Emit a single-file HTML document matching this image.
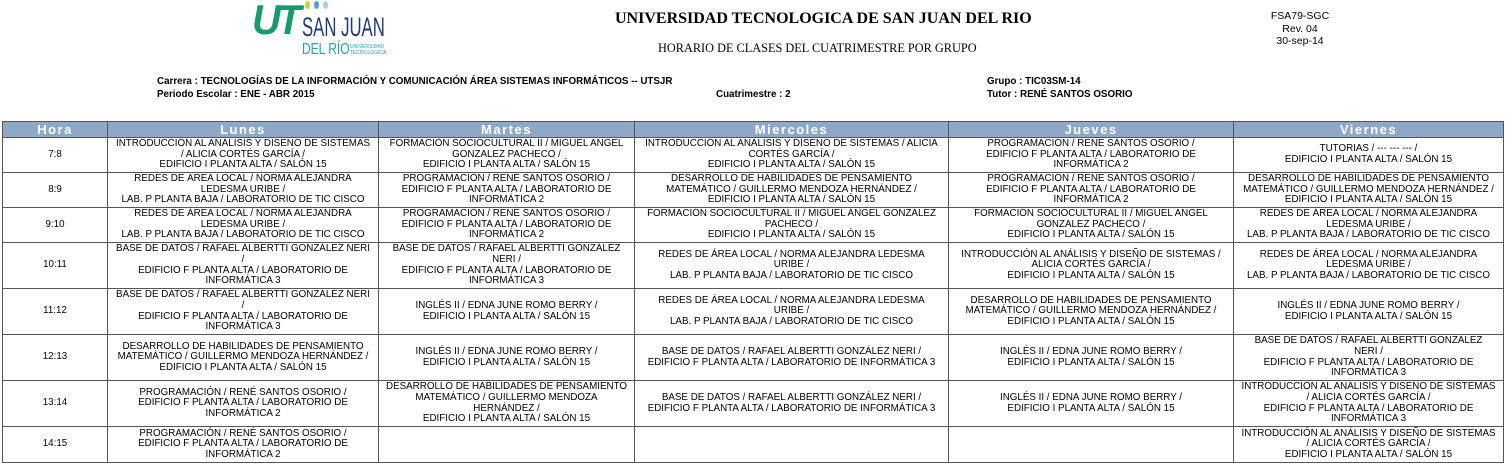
<!DOCTYPE html>
<html><head><meta charset="utf-8"><style>
body{margin:0;width:1507px;height:464px;background:#fff;position:relative;overflow:hidden;font-family:"Liberation Sans",Arial,sans-serif;color:#000}
.a{position:absolute;white-space:nowrap}
table{position:absolute;left:2px;top:121px;border-collapse:collapse;table-layout:fixed;width:1501px}
td,th{border:1px solid #555;padding:0;text-align:center;vertical-align:middle;overflow:hidden}
th{background:#8ea9c8;color:#fff;font-size:13px;letter-spacing:1.5px;height:15px;line-height:15px}
td{font-size:9.8px;line-height:10.6px;white-space:nowrap}
</style></head><body>
<div class="a" style="left:252px;top:-4px;font:italic 900 42px 'Liberation Sans';color:#1a9a6c;letter-spacing:-4px;transform:scaleX(0.95);transform-origin:left">UT</div>
<div class="a" style="left:305px;top:1px;width:5px;height:8px;border-radius:50%;background:#c3d43a"></div>
<div class="a" style="left:314px;top:1px;width:5px;height:8px;border-radius:50%;background:#4aa3d8"></div>
<div class="a" style="left:323px;top:1px;width:5px;height:8px;border-radius:50%;background:#a8cde8"></div>
<div class="a" style="left:302px;top:12px;font-size:27px;color:#1f3b6e;transform:scaleX(0.62);transform-origin:left">SAN JUAN</div>
<div class="a" style="left:302px;top:41px;font-size:16px;color:#2aa0b0;transform:scaleX(0.75);transform-origin:left">DEL RÍO</div>
<div class="a" style="left:350px;top:44px;font-size:5px;line-height:6px;color:#2aa0b0">UNIVERSIDAD<br>TECNOLÓGICA</div>
<div class="a" style="left:615px;top:10px;font:bold 16px 'Liberation Serif',serif">UNIVERSIDAD TECNOLOGICA DE SAN JUAN DEL RIO</div>
<div class="a" style="left:658px;top:41px;font:12.3px 'Liberation Serif',serif">HORARIO DE CLASES DEL CUATRIMESTRE POR GRUPO</div>
<div class="a" style="left:1260px;top:10px;width:80px;text-align:center;font-size:10.5px;line-height:12.5px">FSA79-SGC<br>Rev. 04<br>30-sep-14</div>
<div class="a" style="left:157px;top:75px;font:bold 9.8px 'Liberation Sans';line-height:13px">Carrera : TECNOLOGÍAS DE LA INFORMACIÓN Y COMUNICACIÓN ÁREA SISTEMAS INFORMÁTICOS -- UTSJR<br>Periodo Escolar : ENE - ABR 2015</div>
<div class="a" style="left:716px;top:88px;font:bold 9.8px 'Liberation Sans';line-height:13px">Cuatrimestre : 2</div>
<div class="a" style="left:987px;top:75px;font:bold 9.8px 'Liberation Sans';line-height:13px">Grupo : TIC03SM-14<br>Tutor : RENÉ SANTOS OSORIO</div>
<table>
<colgroup><col style="width:105px"><col style="width:271px"><col style="width:256px"><col style="width:314px"><col style="width:285px"><col style="width:270px"></colgroup>
<tr><th>Hora</th><th>Lunes</th><th>Martes</th><th>Miercoles</th><th>Jueves</th><th>Viernes</th></tr>
<tr style="height:35px"><td>7:8</td><td>INTRODUCCIÓN AL ANÁLISIS Y DISEÑO DE SISTEMAS<br>/ ALICIA CORTÉS GARCÍA /<br>EDIFICIO I PLANTA ALTA / SALÓN 15</td><td>FORMACIÓN SOCIOCULTURAL II / MIGUEL ANGEL<br>GONZALEZ PACHECO /<br>EDIFICIO I PLANTA ALTA / SALÓN 15</td><td>INTRODUCCIÓN AL ANÁLISIS Y DISEÑO DE SISTEMAS / ALICIA<br>CORTÉS GARCÍA /<br>EDIFICIO I PLANTA ALTA / SALÓN 15</td><td>PROGRAMACIÓN / RENÉ SANTOS OSORIO /<br>EDIFICIO F PLANTA ALTA / LABORATORIO DE<br>INFORMÁTICA 2</td><td>TUTORIAS / --- --- --- /<br>EDIFICIO I PLANTA ALTA / SALÓN 15</td></tr>
<tr style="height:35px"><td>8:9</td><td>REDES DE ÁREA LOCAL / NORMA ALEJANDRA<br>LEDESMA URIBE /<br>LAB. P PLANTA BAJA / LABORATORIO DE TIC CISCO</td><td>PROGRAMACIÓN / RENÉ SANTOS OSORIO /<br>EDIFICIO F PLANTA ALTA / LABORATORIO DE<br>INFORMÁTICA 2</td><td>DESARROLLO DE HABILIDADES DE PENSAMIENTO<br>MATEMÁTICO / GUILLERMO MENDOZA HERNÁNDEZ /<br>EDIFICIO I PLANTA ALTA / SALÓN 15</td><td>PROGRAMACIÓN / RENÉ SANTOS OSORIO /<br>EDIFICIO F PLANTA ALTA / LABORATORIO DE<br>INFORMÁTICA 2</td><td>DESARROLLO DE HABILIDADES DE PENSAMIENTO<br>MATEMÁTICO / GUILLERMO MENDOZA HERNÁNDEZ /<br>EDIFICIO I PLANTA ALTA / SALÓN 15</td></tr>
<tr style="height:35px"><td>9:10</td><td>REDES DE ÁREA LOCAL / NORMA ALEJANDRA<br>LEDESMA URIBE /<br>LAB. P PLANTA BAJA / LABORATORIO DE TIC CISCO</td><td>PROGRAMACIÓN / RENÉ SANTOS OSORIO /<br>EDIFICIO F PLANTA ALTA / LABORATORIO DE<br>INFORMÁTICA 2</td><td>FORMACIÓN SOCIOCULTURAL II / MIGUEL ANGEL GONZALEZ<br>PACHECO /<br>EDIFICIO I PLANTA ALTA / SALÓN 15</td><td>FORMACIÓN SOCIOCULTURAL II / MIGUEL ANGEL<br>GONZALEZ PACHECO /<br>EDIFICIO I PLANTA ALTA / SALÓN 15</td><td>REDES DE ÁREA LOCAL / NORMA ALEJANDRA<br>LEDESMA URIBE /<br>LAB. P PLANTA BAJA / LABORATORIO DE TIC CISCO</td></tr>
<tr style="height:46px"><td>10:11</td><td>BASE DE DATOS / RAFAEL ALBERTTI GONZÁLEZ NERI<br>/<br>EDIFICIO F PLANTA ALTA / LABORATORIO DE<br>INFORMÁTICA 3</td><td>BASE DE DATOS / RAFAEL ALBERTTI GONZÁLEZ<br>NERI /<br>EDIFICIO F PLANTA ALTA / LABORATORIO DE<br>INFORMÁTICA 3</td><td>REDES DE ÁREA LOCAL / NORMA ALEJANDRA LEDESMA<br>URIBE /<br>LAB. P PLANTA BAJA / LABORATORIO DE TIC CISCO</td><td>INTRODUCCIÓN AL ANÁLISIS Y DISEÑO DE SISTEMAS /<br>ALICIA CORTÉS GARCÍA /<br>EDIFICIO I PLANTA ALTA / SALÓN 15</td><td>REDES DE ÁREA LOCAL / NORMA ALEJANDRA<br>LEDESMA URIBE /<br>LAB. P PLANTA BAJA / LABORATORIO DE TIC CISCO</td></tr>
<tr style="height:46px"><td>11:12</td><td>BASE DE DATOS / RAFAEL ALBERTTI GONZÁLEZ NERI<br>/<br>EDIFICIO F PLANTA ALTA / LABORATORIO DE<br>INFORMÁTICA 3</td><td>INGLÉS II / EDNA JUNE ROMO BERRY /<br>EDIFICIO I PLANTA ALTA / SALÓN 15</td><td>REDES DE ÁREA LOCAL / NORMA ALEJANDRA LEDESMA<br>URIBE /<br>LAB. P PLANTA BAJA / LABORATORIO DE TIC CISCO</td><td>DESARROLLO DE HABILIDADES DE PENSAMIENTO<br>MATEMÁTICO / GUILLERMO MENDOZA HERNÁNDEZ /<br>EDIFICIO I PLANTA ALTA / SALÓN 15</td><td>INGLÉS II / EDNA JUNE ROMO BERRY /<br>EDIFICIO I PLANTA ALTA / SALÓN 15</td></tr>
<tr style="height:46px"><td>12:13</td><td>DESARROLLO DE HABILIDADES DE PENSAMIENTO<br>MATEMÁTICO / GUILLERMO MENDOZA HERNÁNDEZ /<br>EDIFICIO I PLANTA ALTA / SALÓN 15</td><td>INGLÉS II / EDNA JUNE ROMO BERRY /<br>EDIFICIO I PLANTA ALTA / SALÓN 15</td><td>BASE DE DATOS / RAFAEL ALBERTTI GONZÁLEZ NERI /<br>EDIFICIO F PLANTA ALTA / LABORATORIO DE INFORMÁTICA 3</td><td>INGLÉS II / EDNA JUNE ROMO BERRY /<br>EDIFICIO I PLANTA ALTA / SALÓN 15</td><td>BASE DE DATOS / RAFAEL ALBERTTI GONZÁLEZ<br>NERI /<br>EDIFICIO F PLANTA ALTA / LABORATORIO DE<br>INFORMÁTICA 3</td></tr>
<tr style="height:46px"><td>13:14</td><td>PROGRAMACIÓN / RENÉ SANTOS OSORIO /<br>EDIFICIO F PLANTA ALTA / LABORATORIO DE<br>INFORMÁTICA 2</td><td>DESARROLLO DE HABILIDADES DE PENSAMIENTO<br>MATEMÁTICO / GUILLERMO MENDOZA<br>HERNÁNDEZ /<br>EDIFICIO I PLANTA ALTA / SALÓN 15</td><td>BASE DE DATOS / RAFAEL ALBERTTI GONZÁLEZ NERI /<br>EDIFICIO F PLANTA ALTA / LABORATORIO DE INFORMÁTICA 3</td><td>INGLÉS II / EDNA JUNE ROMO BERRY /<br>EDIFICIO I PLANTA ALTA / SALÓN 15</td><td>INTRODUCCIÓN AL ANÁLISIS Y DISEÑO DE SISTEMAS<br>/ ALICIA CORTÉS GARCÍA /<br>EDIFICIO F PLANTA ALTA / LABORATORIO DE<br>INFORMÁTICA 3</td></tr>
<tr style="height:36px"><td>14:15</td><td>PROGRAMACIÓN / RENÉ SANTOS OSORIO /<br>EDIFICIO F PLANTA ALTA / LABORATORIO DE<br>INFORMÁTICA 2</td><td></td><td></td><td></td><td>INTRODUCCIÓN AL ANÁLISIS Y DISEÑO DE SISTEMAS<br>/ ALICIA CORTÉS GARCÍA /<br>EDIFICIO I PLANTA ALTA / SALÓN 15</td></tr>
</table>
</body></html>
